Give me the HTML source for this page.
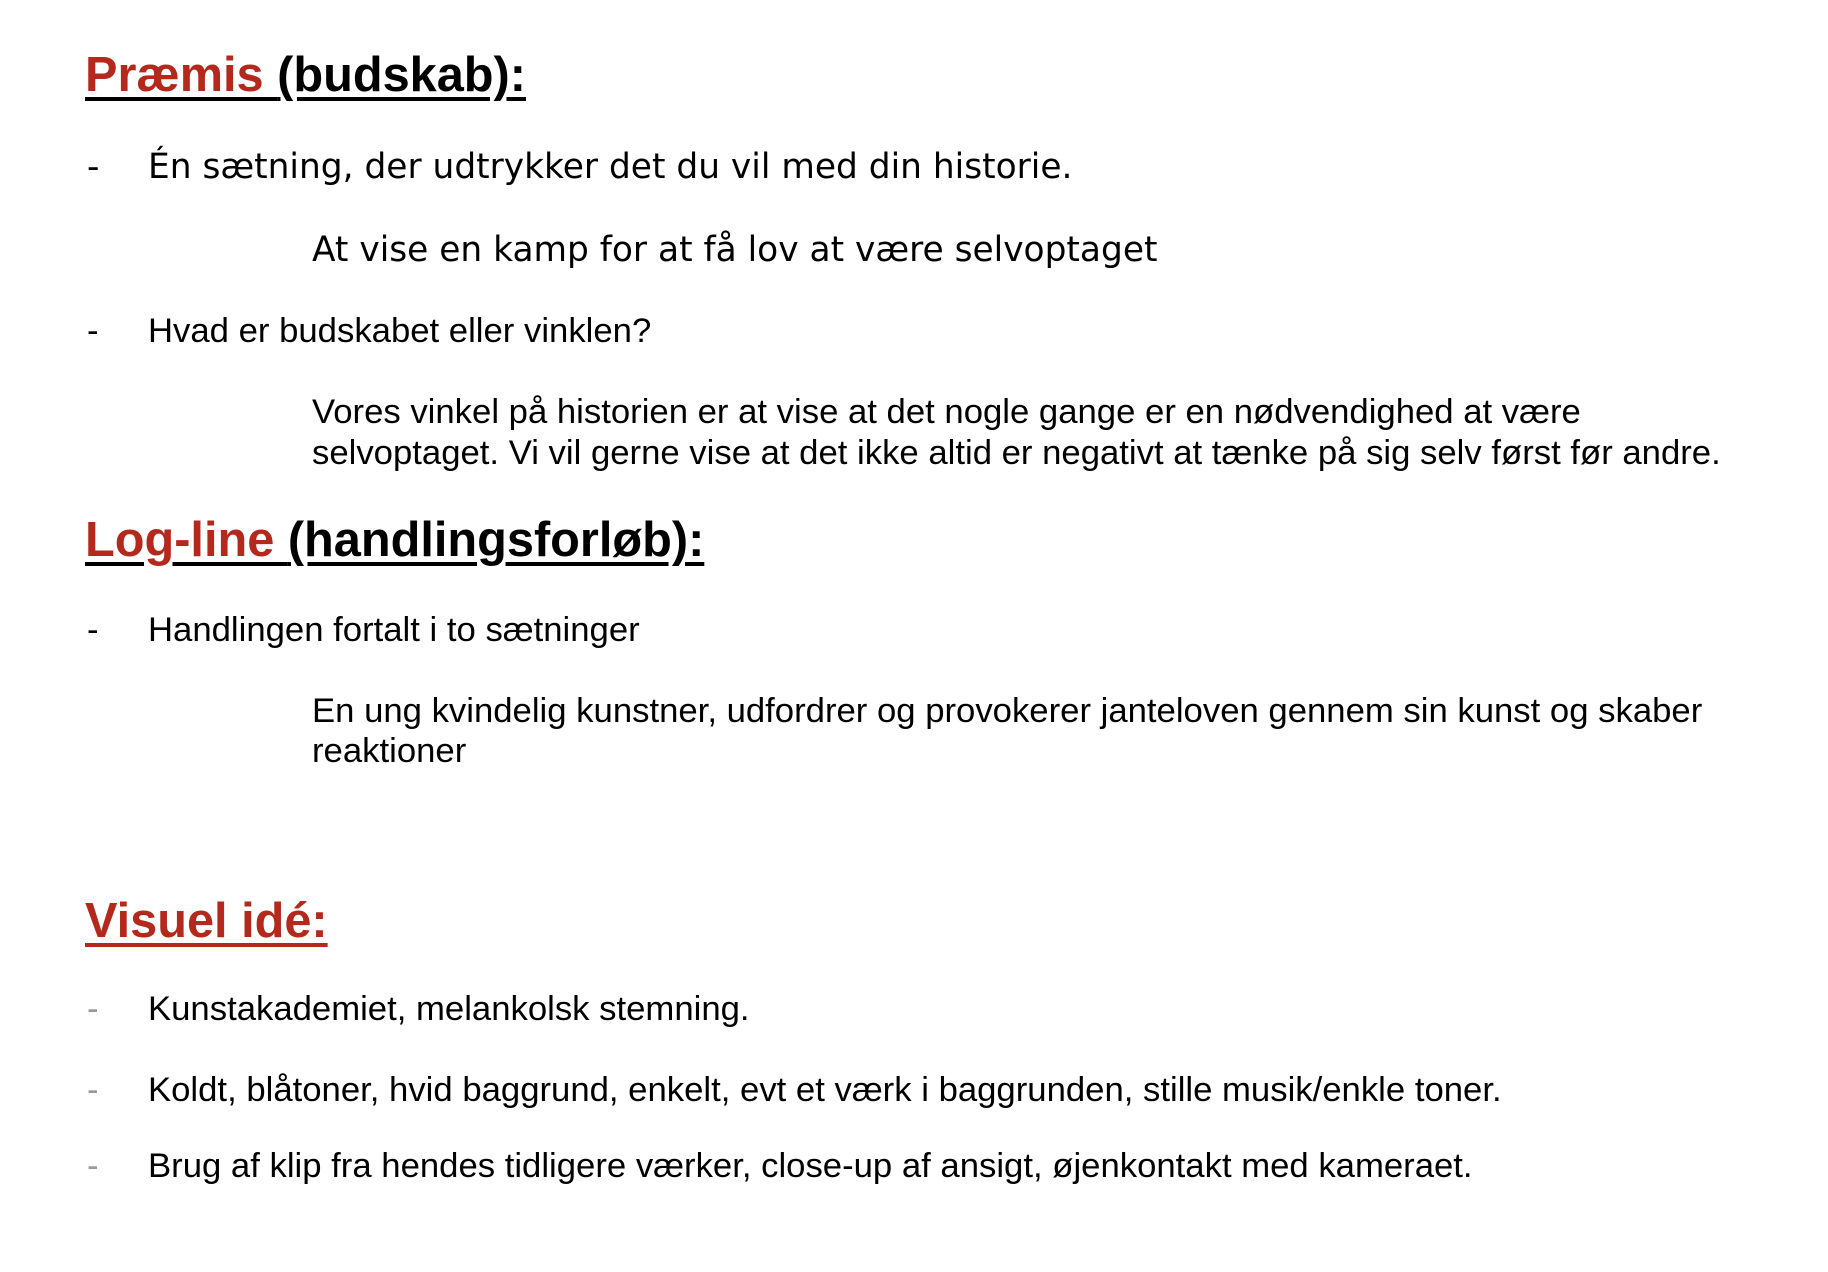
<!DOCTYPE html>
<html><head><meta charset="utf-8"><style>
html,body{margin:0;padding:0;background:#fff;width:1828px;height:1272px;overflow:hidden;position:relative}
div{position:absolute;white-space:nowrap;line-height:1;color:#000}
.h{font-family:"Liberation Sans",Arial,sans-serif;font-weight:bold;font-size:48.7px;left:85px;text-decoration:underline;text-decoration-thickness:4px;text-underline-offset:6px}
.r{color:#b5281c}
.b{font-family:"Liberation Sans",Arial,sans-serif;font-size:34.7px}
.v{font-family:"DejaVu Sans",sans-serif;font-size:34.4px}
.d{left:87px}
.g{color:#999}
</style></head><body>
<div class="h" style="top:51px"><span class="r">Præmis </span>(budskab):</div>
<div class="v d" style="top:150px">-</div>
<div class="v" style="left:148px;top:150px">Én sætning, der udtrykker det du vil med din historie.</div>
<div class="v" style="left:312px;top:233px">At vise en kamp for at få lov at være selvoptaget</div>
<div class="b d" style="top:314px">-</div>
<div class="b" style="left:148px;top:314px">Hvad er budskabet eller vinklen?</div>
<div class="b" style="left:312px;top:395px">Vores vinkel på historien er at vise at det nogle gange er en nødvendighed at være</div>
<div class="b" style="left:312px;top:436px">selvoptaget. Vi vil gerne vise at det ikke altid er negativt at tænke på sig selv først før andre.</div>
<div class="h" style="top:516px"><span class="r">Log-line </span>(handlingsforløb):</div>
<div class="b d" style="top:613px">-</div>
<div class="b" style="left:148px;top:613px">Handlingen fortalt i to sætninger</div>
<div class="b" style="left:312px;top:694px">En ung kvindelig kunstner, udfordrer og provokerer janteloven gennem sin kunst og skaber</div>
<div class="b" style="left:312px;top:734px">reaktioner</div>
<div class="h r" style="top:897px">Visuel idé:</div>
<div class="b d g" style="top:992px">-</div>
<div class="b" style="left:148px;top:992px">Kunstakademiet, melankolsk stemning.</div>
<div class="b d g" style="top:1073px">-</div>
<div class="b" style="left:148px;top:1073px">Koldt, blåtoner, hvid baggrund, enkelt, evt et værk i baggrunden, stille musik/enkle toner.</div>
<div class="b d g" style="top:1149px">-</div>
<div class="b" style="left:148px;top:1149px">Brug af klip fra hendes tidligere værker, close-up af ansigt, øjenkontakt med kameraet.</div>
</body></html>
